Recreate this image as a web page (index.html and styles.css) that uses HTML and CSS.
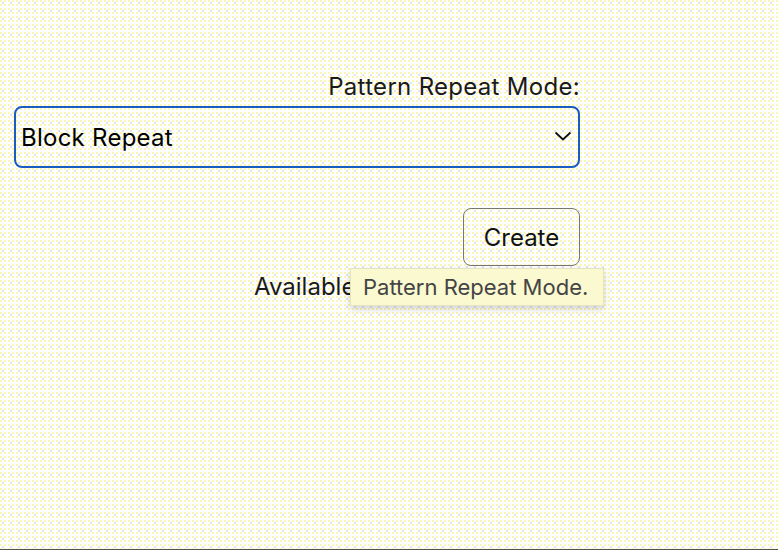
FILE: index.html
```html
<!DOCTYPE html>
<html>
<head>
<meta charset="utf-8">
<link rel="stylesheet" href="styles.css">
</head>
<body>
<div class="form">
  <label class="label">Pattern Repeat Mode:</label>
  <div class="select">
    <span class="select-text">Block Repeat</span>
    <svg class="chev" width="18" height="10" viewBox="0 0 18 10"><polyline points="1.5,1.5 9,8.5 16.5,1.5" fill="none" stroke="#111" stroke-width="1.8"/></svg>
  </div>
  <button class="btn">Create</button>
  <div class="avail">Available patterns: 4</div>
  <div class="tooltip">Pattern Repeat Mode.</div>
</div>
</body>
</html>
```

FILE: styles.css
```css
html, body {
  margin: 0;
  padding: 0;
  width: 778px;
  height: 550px;
  overflow: hidden;
}
body {
  background-color: #ffffff;
  background-image:
    radial-gradient(circle at 1px 1px, #faf7b4 0.7px, transparent 0.9px),
    radial-gradient(circle at 3px 3px, #e2e0f4 0.7px, transparent 0.9px);
  background-size: 4px 4px, 8px 8px;
  font-family: "Inter", "Noto Sans", sans-serif;
  color: #1a1a1a;
  border-bottom: 1px solid #555;
  box-sizing: border-box;
}
.form {
  position: relative;
  width: 566px;
  margin-left: 14px;
  padding-top: 72px;
  display: flex;
  flex-direction: column;
  align-items: flex-end;
}
.label {
  font-size: 24px;
  line-height: 29px;
  margin-bottom: 5px;
  letter-spacing: 0.3px;
}
.select {
  align-self: stretch;
  height: 62px;
  box-sizing: border-box;
  border: 2px solid #1b5cc4;
  border-radius: 8px;
  display: flex;
  align-items: center;
  justify-content: space-between;
  padding: 0 6px 0 5px;
  background: transparent;
}
.select-text {
  font-size: 24px;
  line-height: 29px;
  letter-spacing: 0.25px;
  color: #000;
}
.chev {
  margin-bottom: 3px;
}
.btn {
  margin-top: 40px;
  width: 117px;
  height: 58px;
  border: 1px solid #777;
  border-radius: 8px;
  background: transparent;
  font-family: inherit;
  font-size: 24px;
  color: #111;
  padding: 0;
}
.avail {
  align-self: stretch;
  padding-left: 240px;
  font-size: 24px;
  line-height: 29px;
  margin-top: 6px;
}
.tooltip {
  position: absolute;
  left: 336px;
  top: 268px;
  width: 254px;
  height: 38px;
  box-sizing: border-box;
  background: #fbf9d0;
  border: 1px solid #e6e3c0;
  box-shadow: 0 3px 7px rgba(0,0,0,0.18);
  font-size: 22px;
  line-height: 36px;
  color: #444;
  padding-left: 12px;
  white-space: nowrap;
}
```
